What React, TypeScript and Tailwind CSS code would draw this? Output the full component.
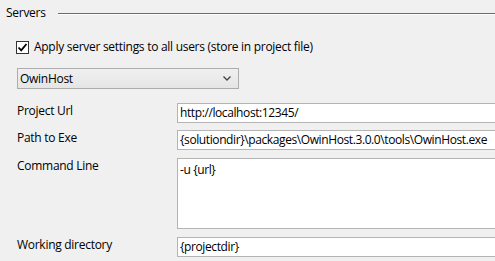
import React from "react";

function Input({ value, h = "h-[20px]", multi = false }: { value: string; h?: string; multi?: boolean }) {
  return (
    <div
      className={`${h} w-[330px] shrink-0 bg-white border border-[#b4b4b4] pl-[2px] tracking-[-0.4px] ${
        multi ? "pt-[3px]" : "flex items-center"
      } whitespace-nowrap text-[#000] leading-[16px]`}
    >
      {value}
    </div>
  );
}

export default function App() {
  return (
    <div
      className="w-[495px] h-[261px] overflow-hidden bg-[#f0f0f0] text-[12px] leading-[16px] tracking-[-0.28px] text-[#000]"
      style={{ fontFamily: '"Open Sans", "Noto Sans", sans-serif' }}
    >
      <div className="flex items-center pl-[6px] pt-[5px]">
        <span>Servers</span>
        <div className="flex-1 ml-[12px] mt-[1px] border-t border-[#6a6a6a] border-b border-b-white h-[2px]" />
      </div>

      <div className="flex items-center pl-[16px] mt-[18px]">
        <div className="w-[13px] h-[13px] border border-[#333] bg-white flex items-center justify-center">
          <svg width="11" height="11" viewBox="0 0 11 11">
            <path d="M1.5 5.5 L4.2 8.3 L9.5 2" stroke="#000" strokeWidth="1.8" fill="none" />
          </svg>
        </div>
        <span className="ml-[5px]">Apply server settings to all users (store in project file)</span>
      </div>

      <div className="ml-[17px] mt-[13px] w-[222px] h-[21px] border border-[#acacac] bg-gradient-to-b from-[#f0f0f0] to-[#e5e5e5] flex items-center justify-between pl-[2px] pr-[7px]">
        <span>OwinHost</span>
        <svg width="8" height="5" viewBox="0 0 8 5">
          <path d="M0.5 0.5 L4 4 L7.5 0.5" stroke="#444" strokeWidth="1.3" fill="none" />
        </svg>
      </div>

      <div className="flex flex-col gap-[7px] mt-[14px] pl-[17px]">
        <div className="flex">
          <div className="w-[160px] shrink-0">Project Url</div>
          <Input value="http://localhost:12345/" />
        </div>
        <div className="flex">
          <div className="w-[160px] shrink-0">Path to Exe</div>
          <Input value="{solutiondir}\packages\OwinHost.3.0.0\tools\OwinHost.exe" />
        </div>
        <div className="flex mt-[1px]">
          <div className="w-[160px] shrink-0">Command Line</div>
          <Input value="-u {url}" h="h-[71px]" multi />
        </div>
        <div className="flex mt-[1px]">
          <div className="w-[160px] shrink-0">Working directory</div>
          <Input value="{projectdir}" />
        </div>
      </div>
    </div>
  );
}
